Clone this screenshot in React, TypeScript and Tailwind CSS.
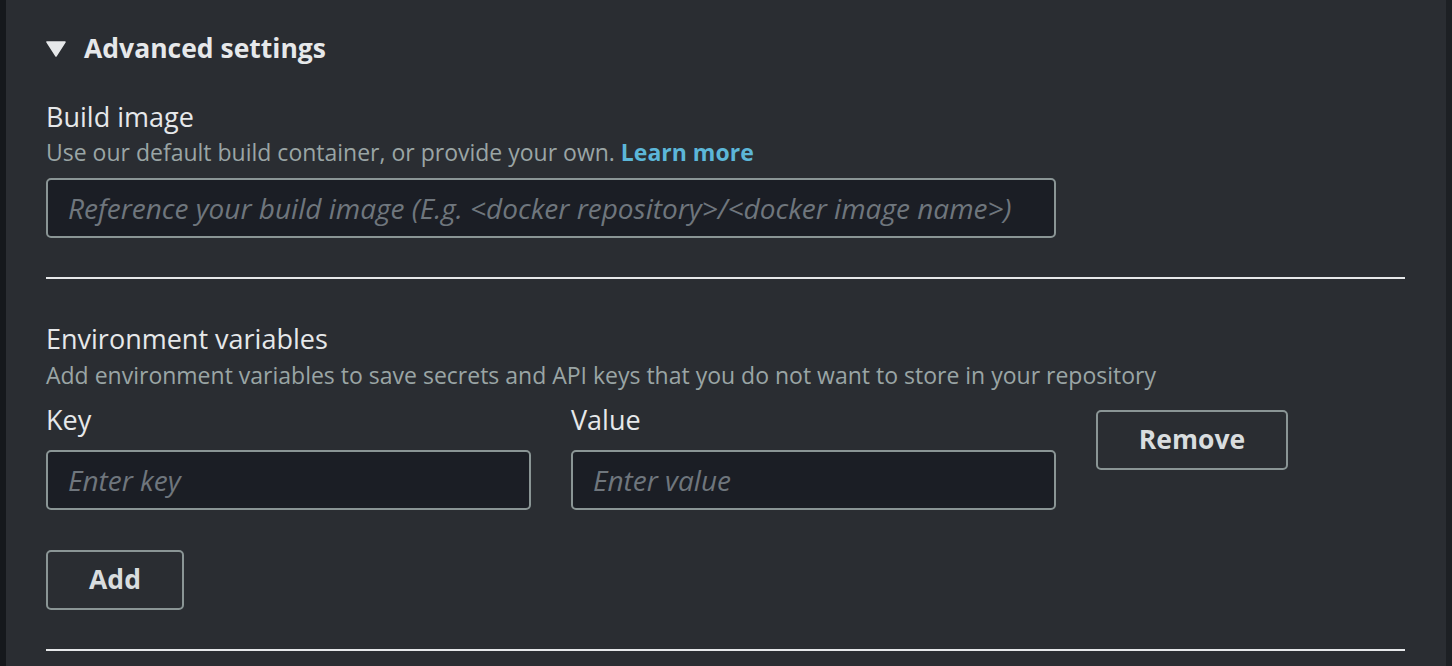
import React from "react";

const font = { fontFamily: '"Open Sans", "Noto Sans", sans-serif' };

function TextInput({ placeholder, className }: { placeholder: string; className?: string }) {
  return (
    <input
      type="text"
      placeholder={placeholder}
      className={
        "h-[60px] rounded-[5px] border-2 border-[#8a9595] bg-[#1b1e25] pl-[20px] text-[28px] italic text-[#e9ebed] outline-none placeholder:text-[#6f767d] " +
        (className ?? "")
      }
      style={font}
    />
  );
}

function Button({ children, className }: { children: React.ReactNode; className?: string }) {
  return (
    <button
      className={
        "h-[60px] rounded-[5px] border-2 border-[#8a9595] bg-transparent text-[26.5px] font-bold text-[#d9dddf] " +
        (className ?? "")
      }
      style={font}
    >
      {children}
    </button>
  );
}

export default function App() {
  return (
    <div className="flex h-[666px] w-[1452px] overflow-hidden bg-[#15181c]" style={font}>
      <div className="w-[6px] shrink-0 bg-[#15181c]" />
      <div className="flex-1 bg-[#2a2d32] pl-[40px] pr-[40px]">
        <div className="flex items-center pt-[31px]">
          <svg width="20" height="16" viewBox="0 0 20 16" className="mr-[18px] mt-[2px]">
            <path d="M1 1 H19 L10 15 Z" fill="#e6e8ea" stroke="#e6e8ea" strokeWidth="1.5" strokeLinejoin="round" />
          </svg>
          <span className="text-[26.5px] font-bold leading-[34px] text-[#e6e8ea]">Advanced settings</span>
        </div>

        <div className="mt-[35px] text-[27px] leading-[34px] text-[#e6e8ea]">Build image</div>
        <div className="mt-[3px] text-[23px] leading-[30px] text-[#9aa5a5]">
          Use our default build container, or provide your own.{" "}
          <span className="font-bold text-[#5cb6d8]">Learn more</span>
        </div>
        <TextInput
          placeholder="Reference your build image (E.g. <docker repository>/<docker image name>)"
          className="mt-[11px] w-[1010px]"
        />

        <div className="mt-[39px] h-[2px] w-[1359px] bg-[#e6e8ea]" />

        <div className="mt-[43px] text-[27px] leading-[34px] text-[#e6e8ea]">Environment variables</div>
        <div className="mt-[4px] text-[23px] leading-[30px] text-[#9aa5a5]">
          Add environment variables to save secrets and API keys that you do not want to store in your repository
        </div>

        <div className="mt-[13px] flex items-start">
          <div className="flex w-[485px] flex-col">
            <div className="text-[27px] leading-[34px] text-[#e6e8ea]">Key</div>
            <TextInput placeholder="Enter key" className="mt-[13px] w-[485px]" />
          </div>
          <div className="ml-[40px] flex w-[485px] flex-col">
            <div className="text-[27px] leading-[34px] text-[#e6e8ea]">Value</div>
            <TextInput placeholder="Enter value" className="mt-[13px] w-[485px]" />
          </div>
          <Button className="ml-[40px] mt-[7px] w-[192px]">Remove</Button>
        </div>

        <Button className="mt-[40px] w-[138px]">Add</Button>

        <div className="mt-[39px] h-[2px] w-[1359px] bg-[#e6e8ea]" />
      </div>
      <div className="w-[6px] shrink-0 bg-[#1d2024]" />
    </div>
  );
}
